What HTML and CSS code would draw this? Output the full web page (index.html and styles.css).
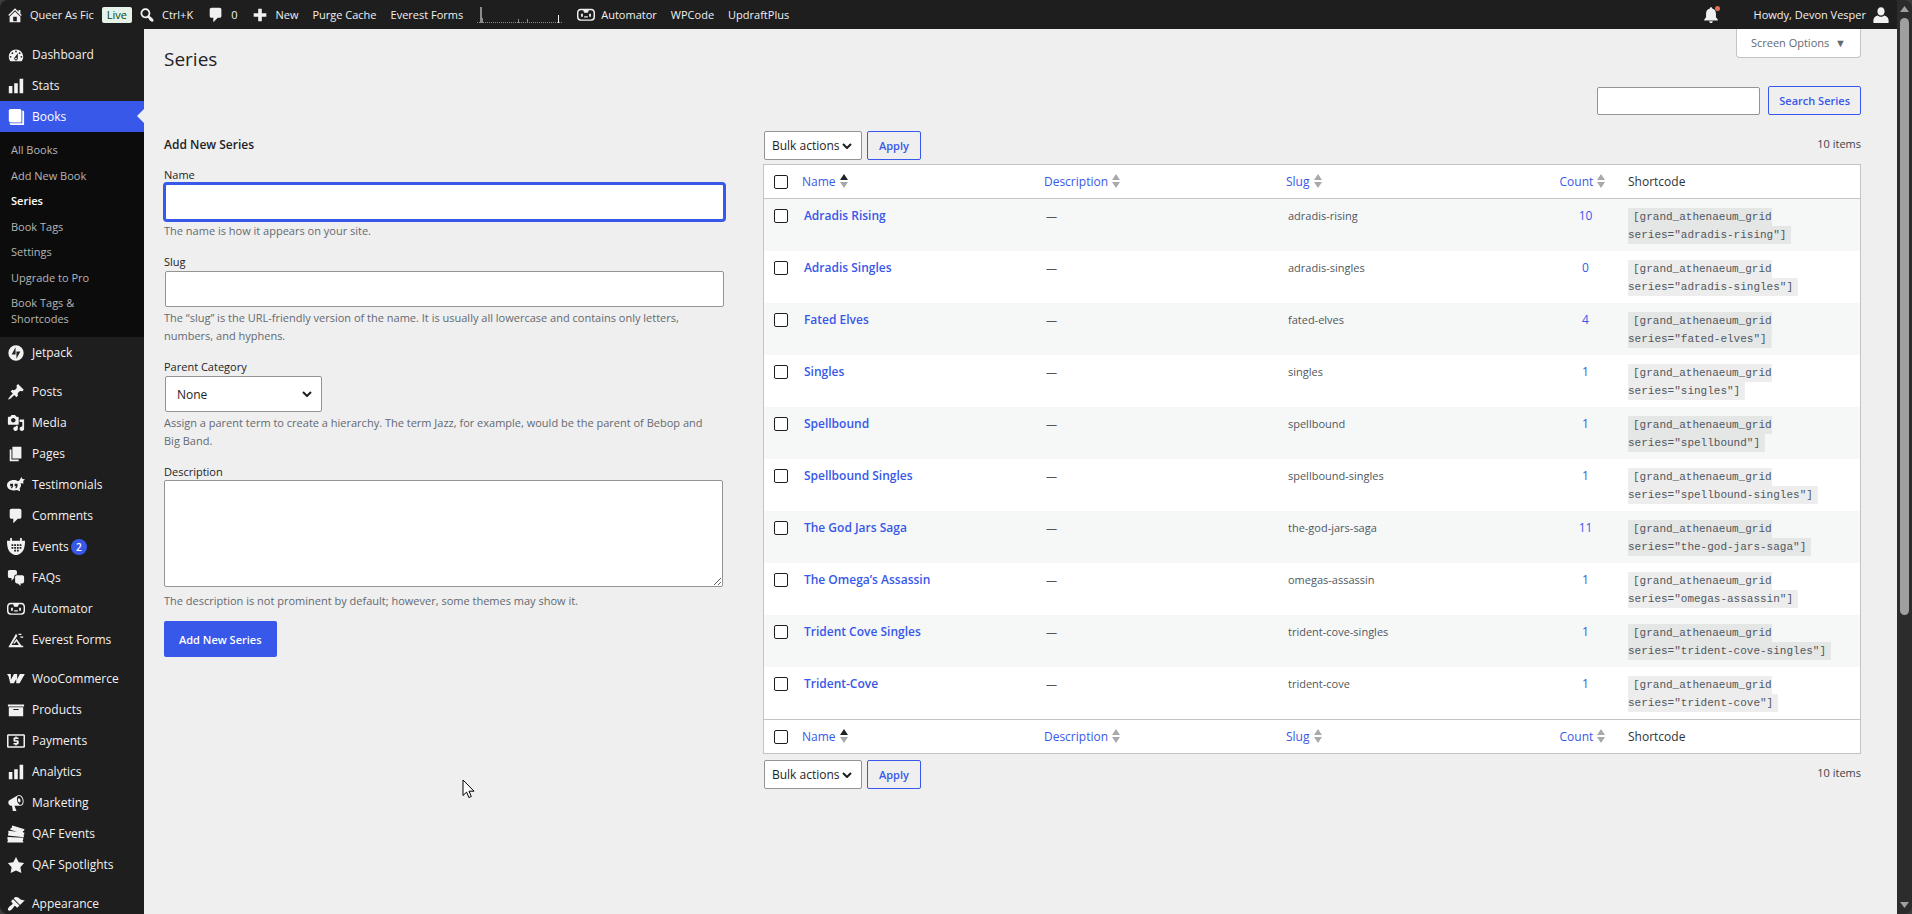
FILE: index.html
```html
<!DOCTYPE html>
<html lang="en-US">
<head>
    <meta charset="UTF-8">
    <meta name="viewport" content="width=device-width, initial-scale=1.0">
    <title>Series</title>
    <link rel="stylesheet" href="styles.css">
</head>
<body>
    <!-- Icon sprite -->
    <svg class="sprite" aria-hidden="true">
        <symbol id="i-home" viewBox="0 0 20 20"><path d="M16 8.5l1.53 1.53-1.06 1.06L10 4.6l-6.47 6.49-1.06-1.06L10 2.5l4 4v-2h2v4zm-6-2.46l6 5.99V18H4v-5.97zM12 17v-5H8v5h4z"/></symbol>
        <symbol id="i-search" viewBox="0 0 20 20"><path d="M12.14 4.18c1.87 1.87 2.11 4.75.72 6.89.12.1.22.21.36.31.2.16.47.36.81.59.34.24.56.39.66.47.42.31.73.57.94.78.32.32.6.65.84 1 .25.35.44.69.59 1.04.14.35.21.68.18 1-.02.32-.14.59-.36.81s-.49.34-.81.36c-.31.02-.65-.04-.99-.19-.35-.14-.7-.34-1.04-.59-.35-.24-.68-.52-1-.84-.21-.21-.47-.52-.77-.93-.1-.13-.25-.35-.47-.66-.22-.32-.4-.57-.56-.78-.16-.2-.29-.35-.44-.5-2.07 1.09-4.69.76-6.44-.98-2.14-2.15-2.14-5.64 0-7.78 2.15-2.15 5.63-2.15 7.78 0zm-1.41 6.36c1.36-1.37 1.36-3.58 0-4.95-1.37-1.37-3.59-1.37-4.95 0-1.37 1.37-1.37 3.58 0 4.95 1.36 1.37 3.58 1.37 4.95 0z"/></symbol>
        <symbol id="i-comment" viewBox="0 0 20 20"><path d="M5 2h9q.82 0 1.41.59T16 4v7q0 .82-.59 1.41T14 13h-2l-5 5v-5H5q-.82 0-1.41-.59T3 11V4q0-.82.59-1.41T5 2z"/></symbol>
        <symbol id="i-plus" viewBox="0 0 20 20"><path d="M8 3h4v5h5v4h-5v5H8v-5H3V8h5z"/></symbol>
        <symbol id="i-robot" viewBox="0 0 20 20"><path fill-rule="evenodd" d="M4 3h12c2.6 0 4 2 4 4.500v4.500c0 3-1.400 4.500-4 4.500H4c-2.600 0-4-1.500-4-4.500V7.500C0 5 1.400 3 4 3zm.500 1.600C2.400 4.800 1.600 5.800 1.600 8v3.500c0 2.300.8 3.400 3 3.400h10.800c2.200 0 3-1.100 3-3.400V8c0-2.200-.8-3.200-2.900-3.400h-2.300L12 7.500H8L6.800 4.600zM4.500 8.500h2v3.500h-2zm9 0h2v3.500h-2zM8 11.500h4v1.200H8z"/></symbol>
        <symbol id="i-bell" viewBox="0 0 20 20"><path d="M10 1.500c.8 0 1.300.5 1.300 1.200C14 3.300 15.500 5.500 15.500 8.500v4L17.500 15v1h-15v-1l2-2.500v-4c0-3 1.500-5.200 4.200-5.800 0-.7.500-1.200 1.300-1.200zM8 17h4c0 1.200-.8 2-2 2s-2-.8-2-2z"/></symbol>
        <symbol id="i-user" viewBox="0 0 20 20"><path d="M10 1.500c2.500 0 4 1.900 4 4.500S12.300 10.500 10 10.500 6 8.600 6 6s1.500-4.500 4-4.500zM6.500 10.500C7.400 11.500 8.600 12 10 12s2.600-.5 3.500-1.500c3.500.6 5 3 5 6V18c0 .6-.4 1-1 1h-15c-.6 0-1-.4-1-1v-1.500c0-3 1.500-5.400 5-6z"/></symbol>
        <symbol id="i-dashboard" viewBox="0 0 20 20"><path d="M3.760 17h12.480c1.100-1.370 1.760-3.110 1.760-5 0-4.420-3.580-8-8-8s-8 3.580-8 8c0 1.890.66 3.630 1.760 5zM10 5c.55 0 1 .45 1 1s-.45 1-1 1-1-.45-1-1 .45-1 1-1zM6 7c.55 0 1 .45 1 1s-.45 1-1 1-1-.45-1-1 .45-1 1-1zm8 0c.55 0 1 .45 1 1s-.45 1-1 1-1-.45-1-1 .45-1 1-1zm-5.370 5.550L12 8v6c0 1.100-.9 2-2 2s-2-.9-2-2c0-.57.24-1.080.63-1.450zM4 11c.55 0 1 .45 1 1s-.45 1-1 1-1-.45-1-1 .45-1 1-1zm12 0c.55 0 1 .45 1 1s-.45 1-1 1-1-.45-1-1 .45-1 1-1zm-5 3c0-.55-.45-1-1-1s-1 .45-1 1 .45 1 1 1 1-.45 1-1z"/></symbol>
        <symbol id="i-bars" viewBox="0 0 20 20"><path d="M18 18V2h-4v16h4zm-6 0V7H8v11h4zm-6 0v-8H2v8h4z"/></symbol>
        <symbol id="i-book" viewBox="0 0 20 20"><path d="M4 1h10c1.100 0 2 .9 2 2v13H4c-1.100 0-2-.9-2-2V3c0-1.100.9-2 2-2zM17 3h1c.6 0 1 .4 1 1v15H5c-1.200 0-2-.7-2.300-2H17z"/></symbol>
        <symbol id="i-jetpack" viewBox="0 0 20 20"><path fill-rule="evenodd" d="M10 1.500a8.500 8.500 0 1 1 0 17 8.500 8.500 0 0 1 0-17zM9.500 3.500L5.200 11.700H9.500zM10.500 8.200v8.300l4.300-8.300z"/></symbol>
        <symbol id="i-pin" viewBox="0 0 20 20"><path d="M10.440 3.020l1.820-1.820 6.360 6.350-1.830 1.820c-1.050-.68-2.480-.57-3.410.36l-.75.75c-.92.93-1.040 2.350-.35 3.410l-1.830 1.820-2.410-2.410-2.800 2.790c-.42.42-3.380 2.710-3.800 2.290s1.860-3.390 2.280-3.810l2.790-2.790L4.100 9.360l1.830-1.820c1.050.69 2.480.57 3.400-.36l.75-.75c.93-.92 1.050-2.350.36-3.410z"/></symbol>
        <symbol id="i-media" viewBox="0 0 20 20"><path d="M13 11V4c0-.55-.45-1-1-1h-1.670L9 1H5L3.670 3H2c-.55 0-1 .45-1 1v7c0 .55.45 1 1 1h10c.55 0 1-.45 1-1zM7 4.500c1.380 0 2.500 1.120 2.500 2.500S8.380 9.500 7 9.500 4.500 8.380 4.500 7 5.620 4.500 7 4.500zM14 6h5v10.500c0 1.380-1.120 2.500-2.500 2.500S14 17.880 14 16.500s1.120-2.500 2.500-2.500c.17 0 .34.02.5.05V9h-3V6zm-4 8.050V13h2v3.500c0 1.380-1.120 2.500-2.500 2.500S7 17.880 7 16.500 8.120 14 9.500 14c.17 0 .34.02.5.05z"/></symbol>
        <symbol id="i-page" viewBox="0 0 20 20"><path d="M6 15V2h10v13H6zm-1 1h8v2H3V5h2v11z"/></symbol>
        <symbol id="i-quote" viewBox="0 0 20 20"><path fill-rule="evenodd" d="M7.500 4.500c2 0 3.500.4 4.700 1.300L14 4.700 16 1l1.200 2.200L20 3.500l-2 2 .2 3-3.200-.8c.4.900.6 1.700.6 2.300 0 1.500-.6 2.700-1.500 3.700l.4 3.300-3.500-1.500c-1 .3-2.200.5-3.500.5C3.300 16 0 13.500 0 10.200S3.300 4.500 7.500 4.500zM3.500 8.500v3h1.700c0 .8-.4 1.200-1 1.500l.5.800c1.400-.5 2-1.500 2-2.900V8.500zm5 0v3h1.700c0 .8-.4 1.200-1 1.500l.5.800c1.400-.5 2-1.500 2-2.900V8.500z"/></symbol>
        <symbol id="i-events" viewBox="0 0 20 20"><path fill-rule="evenodd" d="M3.500 0h2v3h9V0h2v3H20c0 7.500-1.500 11.500-4.500 13.700C13.500 18.400 11.800 19 10 19s-3.500-.6-5.500-2.300C1.500 14.500 0 10.500 0 3h3.500zM5 7v2h2V7zm3 0v2h2V7zm3 0v2h2V7zm3 0v2h2V7zM5 10v2h2v-2zm3 0v2h2v-2zm3 0v2h2v-2zm3 0v2h2v-2zm-6 3v2h2v-2zm3 0v2h2v-2z"/></symbol>
        <symbol id="i-chat" viewBox="0 0 20 20"><path d="M11 6h-.82C9.070 6 8 7.200 8 8.160V10l-3 3v-3H3c-1.100 0-2-.9-2-2V3c0-1.100.9-2 2-2h6c1.100 0 2 .9 2 2v3zm0 1h6c1.100 0 2 .9 2 2v5c0 1.100-.9 2-2 2h-2v3l-3-3h-1c-1.100 0-2-.9-2-2V9c0-1.100.9-2 2-2z"/></symbol>
        <symbol id="i-everest" viewBox="0 0 20 20"><path d="M10 3l1.500 2.300L5 15.600h8.200L10.600 11.500 8.600 14H6.800l3.800-5.500 5.600 8H18V18H1.500zM12.500 3H16v1.500h-3zM14.500 6H18v1.500h-3z"/></symbol>
        <symbol id="i-woo" viewBox="0 0 20 20"><path d="M0 4.500h4.300v6.300L7.700 4.500h3.600v5.700l3-5.700h5.500L14 14.800h-3.700V10l-2.600 4.800H3.600L1.800 7.200z"/></symbol>
        <symbol id="i-archive" viewBox="0 0 20 20"><path d="M19 4v2H1V4h18zM2 7h16v10H2V7zm11 3V9H7v1h6z"/></symbol>
        <symbol id="i-dollar" viewBox="0 0 20 20"><path fill-rule="evenodd" d="M1.500 2.500h17c.8 0 1.500.7 1.500 1.500v12c0 .8-.7 1.500-1.500 1.500h-17C.7 17.500 0 16.800 0 16V4c0-.8.7-1.500 1.500-1.500zM1.700 4.200v11.600h16.600V4.200z"/><path d="M9.200 5h1.600v1.200h2v1.700H9.200v1.200h2.400c.8 0 1.400.6 1.400 1.400v2c0 .7-.5 1.300-1.200 1.300h-1V15H9.200v-1.200h-2v-1.700h3.600v-1.200H8.600c-.8 0-1.400-.6-1.400-1.400v-2c0-.7.500-1.300 1.200-1.300h.8z"/></symbol>
        <symbol id="i-megaphone" viewBox="0 0 20 20"><path d="M18.150 5.940c.46 1.620.38 3.220-.02 4.480-.42 1.280-1.260 2.180-2.300 2.480-.16.06-.26.06-.4.06-.06.02-.12.02-.18.02-.06.02-.14.02-.22.02h-6.800l2.220 5.500c.02.14-.06.26-.14.34-.08.1-.24.16-.34.16H6.950c-.1 0-.26-.06-.34-.16-.08-.08-.16-.2-.14-.34l-1-5.500H4.250l-.02-.02c-.5.06-1.080-.18-1.540-.62s-.88-1.080-1.060-1.880c-.24-.8-.2-1.560-.02-2.200.18-.62.58-1.080 1.060-1.300l.02-.02 9-5.400c.1-.06.18-.1.24-.16.06-.04.14-.08.24-.12.16-.08.28-.12.5-.18 1.040-.3 2.240.1 3.220.98s1.840 2.240 2.260 3.860zm-2.580 5.980h-.02c.4-.1.74-.34 1.040-.7.58-.7.86-1.760.86-3.040 0-.64-.1-1.300-.28-1.980-.34-1.360-1.020-2.500-1.780-3.240s-1.680-1.100-2.460-.88c-.82.22-1.400.96-1.700 2-.32 1.040-.28 2.360.06 3.720.38 1.360 1 2.500 1.800 3.240.78.74 1.620 1.100 2.480.88zm-2.540-7.080c.22-.04.42-.02.62.04.38.16.76.48 1.020 1s.42 1.200.42 1.780c0 .3-.04.56-.12.8-.18.48-.44.84-.86.94-.34.1-.8-.06-1.140-.4s-.64-.86-.78-1.500c-.18-.62-.12-1.240.02-1.720s.48-.84.82-.94z"/></symbol>
        <symbol id="i-tickets" viewBox="0 0 20 20"><path d="M6 .5l13.500 4.300-.8 2c-.8-.1-1.300.6-.9 1.300l-.5 1.200L3.500 5.200l.7-1.700c1 .1 1.500-.8 1.100-1.500zM1.500 6.300l17.800 2-.2 2.200c-.9.200-1 1.200-.2 1.500l-.2 1.700-17.700-2 .2-1.900c.9-.2 1-1.200.2-1.500zM.5 13.300l17.500 1v2c-.9.300-.9 1.200 0 1.500V19.500H.5v-1.800c.9-.3.900-1.200 0-1.500z"/></symbol>
        <symbol id="i-star" viewBox="0 0 20 20"><path d="M10 1l3 6 6 .75-4.120 4.620L16 19l-6-3-6 3 1.130-6.630L1 7.750 7 7z"/></symbol>
        <symbol id="i-brush" viewBox="0 0 20 20"><path d="M14.480 11.060L7.410 3.990l1.500-1.500c.5-.56 2.300-.47 3.510.32 1.210.8 1.430 1.280 2.910 2.100 1.180.64 2.450 1.260 4.450.85zm-.71.71L6.700 4.700 4.930 6.470c-.39.39-.39 1.020 0 1.410l1.060 1.060c.39.39.39 1.030 0 1.420-.6.6-1.430 1.110-2.210 1.690-.35.26-.7.53-1.010.84C1.430 14.230.4 16.080 1.400 17.070c.99 1 2.840-.03 4.180-1.360.31-.31.58-.66.85-1.020.57-.78 1.080-1.610 1.690-2.210.39-.39 1.020-.39 1.410 0l1.060 1.060c.39.39 1.020.39 1.410 0z"/></symbol>
        <symbol id="i-sort" viewBox="0 0 8 14"><path d="M4 0l4 6H0z"/><path d="M0 8h8l-4 6z"/></symbol>
        <symbol id="i-sort-asc" viewBox="0 0 8 14"><path fill="#1d2327" d="M4 0l4 6H0z"/><path d="M0 8h8l-4 6z"/></symbol>
    </svg>

    <div class="window">
        <div class="page">
            <header class="adminbar">
                <a class="ab-item" href="#"><svg class="icon"><use href="#i-home"/></svg>Queer As Fic <span class="live">Live</span></a>
                <a class="ab-item" href="#"><svg class="icon"><use href="#i-search"/></svg>Ctrl+K</a>
                <a class="ab-item" href="#"><svg class="icon"><use href="#i-comment"/></svg>0</a>
                <a class="ab-item" href="#"><svg class="icon"><use href="#i-plus"/></svg>New</a>
                <a class="ab-item" href="#">Purge Cache</a>
                <a class="ab-item" href="#">Everest Forms</a>
                <a class="ab-item" href="#" aria-label="Views over 48 hours">
                    <svg width="86" height="16" viewBox="0 0 86 16">
                        <path d="M0 15.500h86" stroke="#8c8c8c" stroke-dasharray="1 1"/>
                        <path d="M3 0h2v11h1v5H3zM41 12h1v4h-1zM50 12h1v4h-1z" fill="#8c8c8c"/>
                        <path d="M81 8h1v8h-1z" fill="#f0f0f1"/>
                    </svg>
                </a>
                <a class="ab-item" href="#"><svg class="icon"><use href="#i-robot"/></svg>Automator</a>
                <a class="ab-item" href="#">WPCode</a>
                <a class="ab-item" href="#">UpdraftPlus</a>
                <a class="ab-item ab-bell" href="#" aria-label="Notifications"><svg class="icon"><use href="#i-bell"/></svg></a>
                <a class="ab-item" href="#">Howdy, Devon Vesper<svg class="icon"><use href="#i-user"/></svg></a>
            </header>

            <div class="columns">
                <nav class="adminmenu">
                    <a class="menu-item" href="#"><svg class="menu-icon"><use href="#i-dashboard"/></svg>Dashboard</a>
                    <a class="menu-item" href="#"><svg class="menu-icon"><use href="#i-bars"/></svg>Stats</a>
                    <a class="menu-item current" href="#"><svg class="menu-icon"><use href="#i-book"/></svg>Books</a>
                    <div class="submenu">
                        <a href="#">All Books</a>
                        <a href="#">Add New Book</a>
                        <a class="current" href="#">Series</a>
                        <a href="#">Book Tags</a>
                        <a href="#">Settings</a>
                        <a href="#">Upgrade to Pro</a>
                        <a href="#">Book Tags &amp; Shortcodes</a>
                    </div>
                    <a class="menu-item" href="#"><svg class="menu-icon"><use href="#i-jetpack"/></svg>Jetpack</a>
                    <div class="separator"></div>
                    <a class="menu-item" href="#"><svg class="menu-icon"><use href="#i-pin"/></svg>Posts</a>
                    <a class="menu-item" href="#"><svg class="menu-icon"><use href="#i-media"/></svg>Media</a>
                    <a class="menu-item" href="#"><svg class="menu-icon"><use href="#i-page"/></svg>Pages</a>
                    <a class="menu-item" href="#"><svg class="menu-icon"><use href="#i-quote"/></svg>Testimonials</a>
                    <a class="menu-item" href="#"><svg class="menu-icon"><use href="#i-comment"/></svg>Comments</a>
                    <a class="menu-item" href="#"><svg class="menu-icon"><use href="#i-events"/></svg>Events<span class="bubble">2</span></a>
                    <a class="menu-item" href="#"><svg class="menu-icon"><use href="#i-chat"/></svg>FAQs</a>
                    <a class="menu-item" href="#"><svg class="menu-icon"><use href="#i-robot"/></svg>Automator</a>
                    <a class="menu-item" href="#"><svg class="menu-icon"><use href="#i-everest"/></svg>Everest Forms</a>
                    <div class="separator"></div>
                    <a class="menu-item" href="#"><svg class="menu-icon"><use href="#i-woo"/></svg>WooCommerce</a>
                    <a class="menu-item" href="#"><svg class="menu-icon"><use href="#i-archive"/></svg>Products</a>
                    <a class="menu-item" href="#"><svg class="menu-icon"><use href="#i-dollar"/></svg>Payments</a>
                    <a class="menu-item" href="#"><svg class="menu-icon"><use href="#i-bars"/></svg>Analytics</a>
                    <a class="menu-item" href="#"><svg class="menu-icon"><use href="#i-megaphone"/></svg>Marketing</a>
                    <a class="menu-item" href="#"><svg class="menu-icon"><use href="#i-tickets"/></svg>QAF Events</a>
                    <a class="menu-item" href="#"><svg class="menu-icon"><use href="#i-star"/></svg>QAF Spotlights</a>
                    <div class="separator"></div>
                    <a class="menu-item" href="#"><svg class="menu-icon"><use href="#i-brush"/></svg>Appearance</a>
                </nav>

                <main class="content">
                    <div class="title-row">
                        <h1>Series</h1>
                        <button type="button" class="screen-options">Screen Options <span class="caret">▼</span></button>
                    </div>

                    <form class="search-box">
                        <input type="search" class="field" aria-label="Search Series">
                        <button type="button" class="button">Search Series</button>
                    </form>

                    <div class="col-container">
                        <form class="col-left">
                            <h2>Add New Series</h2>
                            <div class="form-field">
                                <label for="tag-name">Name</label>
                                <input type="text" id="tag-name" class="field focused">
                                <p>The name is how it appears on your site.</p>
                            </div>
                            <div class="form-field">
                                <label for="tag-slug">Slug</label>
                                <input type="text" id="tag-slug" class="field">
                                <p>The “slug” is the URL-friendly version of the name. It is usually all lowercase and contains only letters, numbers, and hyphens.</p>
                            </div>
                            <div class="form-field">
                                <label for="parent">Parent Category</label>
                                <select id="parent" class="field">
                                    <option>None</option>
                                </select>
                                <p>Assign a parent term to create a hierarchy. The term Jazz, for example, would be the parent of Bebop and Big Band.</p>
                            </div>
                            <div class="form-field">
                                <label for="tag-description">Description</label>
                                <textarea id="tag-description" class="field"></textarea>
                                <p>The description is not prominent by default; however, some themes may show it.</p>
                            </div>
                            <button type="button" class="button-primary">Add New Series</button>
                        </form>

                        <div class="col-right">
                            <div class="tablenav">
                                <select class="field bulk" aria-label="Bulk actions">
                                    <option>Bulk actions</option>
                                </select>
                                <button type="button" class="button">Apply</button>
                                <span class="count-label">10 items</span>
                            </div>

                            <table class="list-table">
                                <thead>
                                    <tr>
                                        <th class="check"><input type="checkbox" aria-label="Select All"></th>
                                        <th><a href="#">Name <svg class="sort"><use href="#i-sort-asc"/></svg></a></th>
                                        <th><a href="#">Description <svg class="sort"><use href="#i-sort"/></svg></a></th>
                                        <th><a href="#">Slug <svg class="sort"><use href="#i-sort"/></svg></a></th>
                                        <th class="num"><a href="#">Count <svg class="sort"><use href="#i-sort"/></svg></a></th>
                                        <th class="shortcode">Shortcode</th>
                                    </tr>
                                </thead>
                                <tbody>
                                    <tr>
                                        <td class="check"><input type="checkbox" aria-label="Select Adradis Rising"></td>
                                        <td><a class="row-title" href="#">Adradis Rising</a></td>
                                        <td>—</td>
                                        <td>adradis-rising</td>
                                        <td class="num"><a href="#">10</a></td>
                                        <td class="shortcode"><code>[grand_athenaeum_grid series="adradis-rising"]</code></td>
                                    </tr>
                                    <tr>
                                        <td class="check"><input type="checkbox" aria-label="Select Adradis Singles"></td>
                                        <td><a class="row-title" href="#">Adradis Singles</a></td>
                                        <td>—</td>
                                        <td>adradis-singles</td>
                                        <td class="num"><a href="#">0</a></td>
                                        <td class="shortcode"><code>[grand_athenaeum_grid series="adradis-singles"]</code></td>
                                    </tr>
                                    <tr>
                                        <td class="check"><input type="checkbox" aria-label="Select Fated Elves"></td>
                                        <td><a class="row-title" href="#">Fated Elves</a></td>
                                        <td>—</td>
                                        <td>fated-elves</td>
                                        <td class="num"><a href="#">4</a></td>
                                        <td class="shortcode"><code>[grand_athenaeum_grid series="fated-elves"]</code></td>
                                    </tr>
                                    <tr>
                                        <td class="check"><input type="checkbox" aria-label="Select Singles"></td>
                                        <td><a class="row-title" href="#">Singles</a></td>
                                        <td>—</td>
                                        <td>singles</td>
                                        <td class="num"><a href="#">1</a></td>
                                        <td class="shortcode"><code>[grand_athenaeum_grid series="singles"]</code></td>
                                    </tr>
                                    <tr>
                                        <td class="check"><input type="checkbox" aria-label="Select Spellbound"></td>
                                        <td><a class="row-title" href="#">Spellbound</a></td>
                                        <td>—</td>
                                        <td>spellbound</td>
                                        <td class="num"><a href="#">1</a></td>
                                        <td class="shortcode"><code>[grand_athenaeum_grid series="spellbound"]</code></td>
                                    </tr>
                                    <tr>
                                        <td class="check"><input type="checkbox" aria-label="Select Spellbound Singles"></td>
                                        <td><a class="row-title" href="#">Spellbound Singles</a></td>
                                        <td>—</td>
                                        <td>spellbound-singles</td>
                                        <td class="num"><a href="#">1</a></td>
                                        <td class="shortcode"><code>[grand_athenaeum_grid series="spellbound-singles"]</code></td>
                                    </tr>
                                    <tr>
                                        <td class="check"><input type="checkbox" aria-label="Select The God Jars Saga"></td>
                                        <td><a class="row-title" href="#">The God Jars Saga</a></td>
                                        <td>—</td>
                                        <td>the-god-jars-saga</td>
                                        <td class="num"><a href="#">11</a></td>
                                        <td class="shortcode"><code>[grand_athenaeum_grid series="the-god-jars-saga"]</code></td>
                                    </tr>
                                    <tr>
                                        <td class="check"><input type="checkbox" aria-label="Select The Omega’s Assassin"></td>
                                        <td><a class="row-title" href="#">The Omega’s Assassin</a></td>
                                        <td>—</td>
                                        <td>omegas-assassin</td>
                                        <td class="num"><a href="#">1</a></td>
                                        <td class="shortcode"><code>[grand_athenaeum_grid series="omegas-assassin"]</code></td>
                                    </tr>
                                    <tr>
                                        <td class="check"><input type="checkbox" aria-label="Select Trident Cove Singles"></td>
                                        <td><a class="row-title" href="#">Trident Cove Singles</a></td>
                                        <td>—</td>
                                        <td>trident-cove-singles</td>
                                        <td class="num"><a href="#">1</a></td>
                                        <td class="shortcode"><code>[grand_athenaeum_grid series="trident-cove-singles"]</code></td>
                                    </tr>
                                    <tr>
                                        <td class="check"><input type="checkbox" aria-label="Select Trident-Cove"></td>
                                        <td><a class="row-title" href="#">Trident-Cove</a></td>
                                        <td>—</td>
                                        <td>trident-cove</td>
                                        <td class="num"><a href="#">1</a></td>
                                        <td class="shortcode"><code>[grand_athenaeum_grid series="trident-cove"]</code></td>
                                    </tr>
                                </tbody>
                                <tfoot>
                                    <tr>
                                        <th class="check"><input type="checkbox" aria-label="Select All"></th>
                                        <th><a href="#">Name <svg class="sort"><use href="#i-sort-asc"/></svg></a></th>
                                        <th><a href="#">Description <svg class="sort"><use href="#i-sort"/></svg></a></th>
                                        <th><a href="#">Slug <svg class="sort"><use href="#i-sort"/></svg></a></th>
                                        <th class="num"><a href="#">Count <svg class="sort"><use href="#i-sort"/></svg></a></th>
                                        <th class="shortcode">Shortcode</th>
                                    </tr>
                                </tfoot>
                            </table>

                            <div class="tablenav">
                                <select class="field bulk" aria-label="Bulk actions">
                                    <option>Bulk actions</option>
                                </select>
                                <button type="button" class="button">Apply</button>
                                <span class="count-label">10 items</span>
                            </div>
                        </div>
                    </div>
                </main>
            </div>
        </div>

        <div class="scrollbar" aria-hidden="true">
            <svg width="9" height="6" viewBox="0 0 9 6"><path d="M4.500 0L9 6H0z"/></svg>
            <div class="track"><div class="thumb"></div></div>
            <svg width="9" height="6" viewBox="0 0 9 6"><path d="M0 0h9L4.500 6z"/></svg>
        </div>
    </div>

    <svg class="cursor" width="13" height="20" viewBox="0 0 13 20" aria-hidden="true"><path d="M1 1v15.500l3.600-3.400 2.300 5.400 2.400-1-2.300-5.300h5z" fill="#fff" stroke="#000"/></svg>
</body>
</html>
```
FILE: styles.css
```css
:root {
    --primary: #3858e9;
    --bar: #1e1e1e;
    --bg: #efefef;
    --border: #c3c4c7;
    --field-border: #949494;
    --light: #f3f1f1;
    --muted: #646970;
}

* {
    box-sizing: border-box;
}

body {
    margin: 0;
    background: #3c3c3c;
    color: #3c434a;
    font-family: "Open Sans", "Noto Sans", sans-serif;
    font-size: 11px;
    line-height: 18px;
}

a {
    color: var(--primary);
    text-decoration: none;
}

svg {
    fill: currentColor;
    flex: none;
}

button, input, select, textarea {
    font-family: inherit;
    margin: 0;
}

.sprite {
    position: absolute;
    width: 0;
    height: 0;
}

.window {
    display: flex;
    height: 100vh;
    border-radius: 8px;
    overflow: hidden;
}

.page {
    flex: 1;
    min-width: 0;
    display: flex;
    flex-direction: column;
}

/* Toolbar */
.adminbar {
    display: flex;
    align-items: center;
    gap: 14px;
    height: 29px;
    padding: 0 7px 0 6px;
    background: var(--bar);
    flex: none;
}

.ab-item {
    display: flex;
    align-items: center;
    gap: 6px;
    color: #f0f0f1;
    white-space: nowrap;
}

.icon {
    width: 18px;
    height: 18px;
}

.live {
    margin: 0 -8px 0 2px;
    padding: 0 5px;
    line-height: 16px;
    border-radius: 2px;
    background: #e6f2e8;
    color: #00450c;
}

.ab-bell {
    position: relative;
    margin-left: auto;
    margin-right: 20px;
}

.ab-bell::after {
    content: "";
    position: absolute;
    top: 0;
    right: 0;
    width: 5px;
    height: 5px;
    border-radius: 50%;
    background: #e26f56;
}

/* Side menu */
.columns {
    display: flex;
    flex: 1;
    min-height: 0;
}

.adminmenu {
    width: 144px;
    flex: none;
    padding-top: 10px;
    background: var(--bar);
    overflow: hidden;
}

.menu-item {
    position: relative;
    display: flex;
    align-items: center;
    gap: 7px;
    height: 31px;
    padding-left: 7px;
    color: var(--light);
    font-size: 12px;
    white-space: nowrap;
}

.menu-icon {
    width: 18px;
    height: 18px;
}

.menu-item.current {
    background: var(--primary);
    color: #fff;
}

.menu-item.current::after {
    content: "";
    position: absolute;
    right: 0;
    top: 8px;
    border: 7px solid transparent;
    border-left-width: 0;
    border-right-color: var(--bg);
}

.submenu {
    display: flex;
    flex-direction: column;
    justify-content: space-between;
    min-height: 205px;
    padding: 5px 0;
    background: #0c0c0c;
}

.submenu a {
    padding: 5px 30px 5px 11px;
    line-height: 15px;
    color: #b6b6b6;
}

.submenu a:last-child {
    line-height: 16px;
}

.submenu a.current {
    color: #fff;
    font-weight: 600;
}

.separator {
    height: 8px;
}

.bubble {
    width: 16px;
    margin-left: -5px;
    border-radius: 8px;
    background: var(--primary);
    color: #fff;
    font-size: 10px;
    font-weight: 600;
    line-height: 16px;
    text-align: center;
}

/* Content */
.content {
    flex: 1;
    min-width: 0;
    padding: 0 36px 0 20px;
    background: var(--bg);
    overflow: hidden;
}

.title-row {
    display: flex;
    justify-content: space-between;
    align-items: flex-start;
    height: 57px;
}

h1 {
    margin: 0;
    padding-top: 16px;
    color: #1d2327;
    font-size: 19px;
    font-weight: 400;
    line-height: 28px;
}

.screen-options {
    padding: 0 14px;
    border: 1px solid var(--border);
    border-top: 0;
    border-radius: 0 0 4px 4px;
    background: #fff;
    color: var(--muted);
    font-size: 11px;
    line-height: 28px;
}

.caret {
    margin-left: 3px;
    font-size: 11px;
}

.field {
    display: block;
    border: 1px solid var(--field-border);
    border-radius: 2px;
    background-color: #fff;
    color: #1e1e1e;
    font-size: 12px;
}

select.field {
    appearance: none;
    background-image: url("data:image/svg+xml,%3Csvg xmlns='http://www.w3.org/2000/svg' viewBox='0 0 10 6'%3E%3Cpath d='M1 1l4 4 4-4' fill='none' stroke='%231e1e1e' stroke-width='2'/%3E%3C/svg%3E");
    background-repeat: no-repeat;
    background-position: right 9px center;
    background-size: 10px 6px;
}

.button {
    height: 29px;
    padding: 0 10px;
    border: 1px solid var(--primary);
    border-radius: 2px;
    background: transparent;
    color: var(--primary);
    font-size: 11px;
    font-weight: 600;
}

.search-box {
    display: flex;
    justify-content: flex-end;
    align-items: center;
    gap: 8px;
}

.search-box .field {
    width: 163px;
    height: 28px;
}

.col-container {
    display: flex;
}

.col-left {
    width: 35%;
    padding: 21px 33px 0 0;
}

.col-right {
    flex: 1;
    padding: 12px 0 0 5px;
}

h2 {
    margin: 0 0 13px;
    color: #1d2327;
    font-size: 12px;
    font-weight: 600;
    line-height: 18px;
}

.form-field {
    margin-bottom: 14px;
}

.form-field:last-of-type {
    margin-bottom: 11px;
}

.form-field label {
    display: block;
    color: #1e1e1e;
    line-height: 16px;
}

.form-field .field {
    width: calc(100% - 2px);
    height: 36px;
    margin: 1px;
    padding: 0 11px;
}

.form-field .focused {
    border-color: var(--primary);
    box-shadow: 0 0 0 2px var(--primary);
}

.form-field select.field {
    width: 157px;
}

.form-field textarea.field {
    height: 107px;
    margin: 0 0 5px;
    resize: vertical;
}

.form-field p {
    margin: 2px 0 0;
    padding-right: 12px;
    color: var(--muted);
}

.button-primary {
    height: 36px;
    padding: 0 15px;
    border: 0;
    border-radius: 2px;
    background: var(--primary);
    color: #fff;
    font-size: 11px;
    font-weight: 600;
}

/* Table */
.tablenav {
    display: flex;
    align-items: center;
    gap: 5px;
    padding: 4px 0 4px 1px;
}

.list-table + .tablenav {
    padding-top: 6px;
}

.tablenav .button {
    padding: 0 11px;
}

.bulk {
    width: 98px;
    height: 29px;
    padding: 0 7px;
}

.count-label {
    margin-left: auto;
    padding-bottom: 3px;
}

.list-table {
    width: 100%;
    table-layout: fixed;
    border: 1px solid var(--border);
    border-spacing: 0;
    background: #fff;
}

.list-table th {
    height: 34px;
    padding: 0 7px;
    color: #2c3338;
    font-size: 12px;
    font-weight: 400;
    text-align: left;
}

.list-table thead th {
    border-bottom: 1px solid var(--border);
}

.list-table tfoot th {
    border-top: 1px solid var(--border);
}

.list-table td {
    padding: 8px 9px;
    vertical-align: top;
    color: #50575e;
}

.list-table tbody tr:nth-child(odd) {
    background: #f6f7f7;
}

.list-table .check {
    width: 31px;
    padding-left: 10px;
    padding-right: 0;
}

.list-table .num {
    width: 100px;
    padding-left: 30px;
    text-align: center;
}

.list-table td.num {
    padding-left: 38px;
    font-size: 12px;
}

.list-table .shortcode {
    width: 239px;
    padding-left: 7px;
}

.list-table input {
    appearance: none;
    display: block;
    width: 14px;
    height: 14px;
    border: 1px solid #1e1e1e;
    border-radius: 2px;
    background: #fff;
}

.list-table td input {
    margin-top: 2px;
}

.row-title {
    font-size: 12px;
    font-weight: 600;
}

.sort {
    width: 8px;
    height: 14px;
    margin-left: 1px;
    vertical-align: -2px;
    color: #a7aaad;
}

code {
    padding: 3px 5px;
    background: linear-gradient(rgba(0, 0, 0, 0.07), rgba(0, 0, 0, 0.07)) center / 100% 18px no-repeat;
    font-family: "Liberation Mono", monospace;
    font-size: 11px;
    line-height: 14px;
}

/* Scrollbar */
.scrollbar {
    display: flex;
    flex-direction: column;
    align-items: center;
    gap: 6px;
    width: 15px;
    padding: 6px 0;
    background: #2c2c2c;
    color: #9f9f9f;
}

.track {
    flex: 1;
}

.thumb {
    width: 9px;
    height: 68%;
    border-radius: 5px;
    background: #9f9f9f;
}

.cursor {
    position: absolute;
    left: 462px;
    top: 779px;
}
```
